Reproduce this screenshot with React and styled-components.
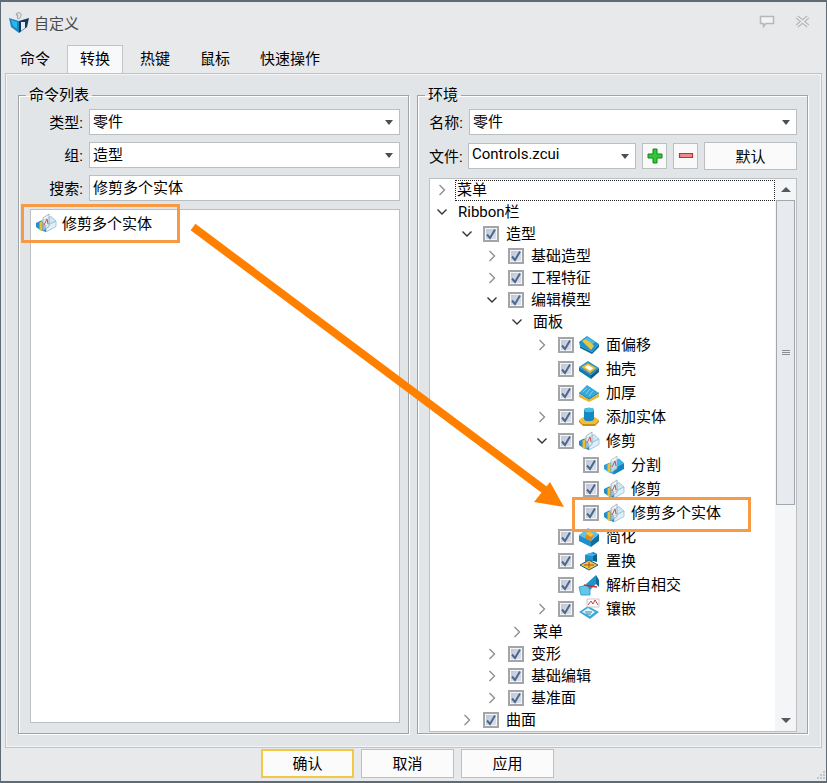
import React from 'react';
import styled, { createGlobalStyle } from 'styled-components';

const GlobalStyle = createGlobalStyle`
  html, body {
    margin: 0;
    padding: 0;
    background: #e8e9eb;
  }
  * {
    box-sizing: border-box;
  }
`;

const Window = styled.div`
  position: relative;
  display: flex;
  flex-direction: column;
  width: 827px;
  height: 783px;
  overflow: hidden;
  background: #e8e9eb;
  border-top: 2px solid #5f6b75;
  border-left: 1px solid #5f6b75;
  border-right: 1px solid #5f6b75;
  border-bottom: 2px solid #5f6b75;
  font-family: Roboto, "Noto Sans CJK SC", sans-serif;
  font-size: 15px;
  color: #000;
`;

const TitleBar = styled.div`
  display: flex;
  align-items: center;
  flex: 0 0 43px;
  padding: 0 16px 2px 7px;
`;

const Title = styled.div`
  margin-left: 4px;
  flex: 1;
  color: #4a4a4a;
`;

const WindowButtons = styled.div`
  display: flex;
  align-items: center;
  gap: 20px;
  margin-bottom: 2px;
`;

const TabBar = styled.div`
  display: flex;
  flex: 0 0 27px;
  gap: 4px;
  padding-left: 6px;
`;

const Tab = styled.div`
  height: ${(p) => (p.$active ? '28px' : '27px')};
  padding: 0 12px;
  line-height: 26px;
  position: relative;
  z-index: 1;
  background: ${(p) => (p.$active ? '#f8f9fa' : 'transparent')};
  border: 1px solid ${(p) => (p.$active ? '#c2c4c6' : 'transparent')};
  border-bottom: none;
`;

const Pane = styled.div`
  display: flex;
  flex: 1;
  gap: 8px;
  min-height: 0;
  margin: 0 4px;
  padding: 11px 13px 13px 12px;
  background: #e2e5e8;
  border: 1px solid #c0c2c4;
  box-shadow: inset 0 0 0 1px #f4f5f6;
`;

const Group = styled.fieldset`
  display: flex;
  flex-direction: column;
  flex: 0 0 391px;
  min-width: 0;
  margin: 0;
  padding: 4px ${(p) => p.$padRight}px ${(p) => p.$padBottom}px 11px;
  border: 1px solid #a0a2a4;
  box-shadow: inset 1px 1px 0 #fff, 1px 1px 0 #fff;
`;

const Legend = styled.legend`
  margin-left: -4px;
  padding: 0 3px;
  line-height: 20px;
`;

const FormRow = styled.div`
  display: flex;
  align-items: center;
  flex: 0 0 ${(p) => p.$height || 26}px;
  margin-bottom: ${(p) => p.$gap || 7}px;
`;

const Label = styled.div`
  flex: 0 0 ${(p) => p.$width}px;
  min-width: 0;
  padding-right: 6px;
  padding-bottom: 2px;
  text-align: right;
  white-space: nowrap;
`;

const Field = styled.div`
  position: relative;
  display: flex;
  align-items: center;
  flex: ${(p) => (p.$width ? `0 0 ${p.$width}px` : '1')};
  height: 26px;
  padding: 0 3px 4px;
  background: #fff;
  border: 1px solid #bcbfc2;
`;

const Caret = styled.span`
  position: absolute;
  right: 6px;
  top: 10px;
  width: 0;
  height: 0;
  border-left: 4px solid transparent;
  border-right: 4px solid transparent;
  border-top: 5px solid #4b4f53;
`;

const SquareButton = styled.div`
  display: flex;
  align-items: center;
  justify-content: center;
  flex: 0 0 25px;
  height: 26px;
  margin-left: ${(p) => p.$left}px;
  background: #f9f9f9;
  border: 1px solid #bcbfc2;
`;

const DefaultButton = styled.div`
  flex: 0 0 93px;
  height: 28px;
  margin-left: 6px;
  line-height: 28px;
  text-align: center;
  background: #fafafa;
  border: 1px solid #bcbfc2;
`;

const ListBox = styled.div`
  flex: 1;
  margin-top: 1px;
  padding: 2px 0 0 4px;
  background: #fff;
  border: 1px solid #bcbfc2;
`;

const ListItem = styled.div`
  display: flex;
  align-items: center;
  gap: 5px;
  height: 22px;
`;

const ListText = styled.span`
  padding-bottom: 2px;
`;

const TreeBox = styled.div`
  display: flex;
  flex: 1;
  min-height: 0;
  background: #fff;
  border: 1px solid #bcbfc2;
`;

const TreeRows = styled.div`
  flex: 1;
  min-width: 0;
  overflow: hidden;
`;

const Row = styled.div`
  display: flex;
  align-items: center;
  height: ${(p) => p.$height}px;
  padding-left: ${(p) => 4 + p.$level * 25}px;
  white-space: nowrap;
`;

const ArrowSlot = styled.span`
  display: flex;
  align-items: center;
  justify-content: center;
  flex: 0 0 16px;
  height: 16px;
  margin-right: 8px;
`;

const CheckBox = styled.span`
  display: flex;
  align-items: center;
  justify-content: center;
  flex: 0 0 16px;
  height: 16px;
  margin-right: ${(p) => (p.$withIcon ? 4 : 7)}px;
  background: linear-gradient(135deg, #bcc5d6, #dfe3ec);
  border: 2px solid #a3a5a7;
  box-shadow: inset 0 0 0 1px #f4f5f8;
`;

const RowIcon = styled.span`
  display: flex;
  flex: 0 0 22px;
  height: 22px;
  margin-right: 6px;
`;

const RowLabel = styled.span`
  line-height: 20px;
  ${(p) => p.$focus && `
    flex: 1;
    margin-left: -3px;
    padding-left: 2px;
    height: 21px;
    outline: 1px dotted #222;
    outline-offset: -1px;
  `}
`;

const ScrollBar = styled.div`
  display: flex;
  flex-direction: column;
  flex: 0 0 21px;
  padding: 0 1px;
  background: #f4f5f6;
`;

const ScrollArrow = styled.div`
  display: flex;
  align-items: center;
  justify-content: center;
  flex: 0 0 21px;
`;

const ScrollTriangle = styled.span`
  width: 0;
  height: 0;
  border-left: 5px solid transparent;
  border-right: 5px solid transparent;
  ${(p) => (p.$up ? 'border-bottom: 5px solid #55595d;' : 'border-top: 5px solid #55595d;')}
`;

const ScrollTrack = styled.div`
  flex: 1;
`;

const ScrollThumb = styled.div`
  display: flex;
  flex-direction: column;
  align-items: center;
  justify-content: center;
  gap: 1px;
  height: 305px;
  background: #e7ebf0;
  border: 1px solid #a4a8ac;
`;

const Grip = styled.span`
  width: 8px;
  height: 1px;
  background: #8c9095;
`;

const Footer = styled.div`
  position: relative;
  display: flex;
  flex: 0 0 33px;
  gap: 7px;
  padding: 1px 0 0 260px;
`;

const FooterButton = styled.div`
  flex: 0 0 93px;
  height: 29px;
  line-height: ${(p) => (p.$primary ? 27 : 26)}px;
  text-align: center;
  background: #fbfbfb;
  border: ${(p) => (p.$primary ? '2px solid #f3c847' : '1px solid #bdbfc1')};
  padding-top: ${(p) => (p.$primary ? 0 : 1)}px;
`;

const ResizeGrip = styled.svg`
  position: absolute;
  right: 0;
  bottom: 0;
`;

const Callout = styled.div`
  position: absolute;
  border: 3px solid #f79a45;
  pointer-events: none;
  z-index: 2;
`;

const ArrowLayer = styled.svg`
  position: absolute;
  left: -1px;
  top: -2px;
  pointer-events: none;
  z-index: 3;
`;

const Chevron = ({ dir }) =>
  dir === 'down' ? (
    <svg width="12" height="12" viewBox="0 0 12 12">
      <path d="M1.5 3.5 6 8l4.5-4.5" fill="none" stroke="#333" strokeWidth="1.4" />
    </svg>
  ) : (
    <svg width="12" height="12" viewBox="0 0 12 12">
      <path d="M3.5 1 8.5 6l-5 5" fill="none" stroke="#8f8f8f" strokeWidth="1.4" />
    </svg>
  );

const Check = () => (
  <svg width="12" height="12" viewBox="0 0 12 12">
    <path d="M2 6.5 5 10 10 1.5" fill="none" stroke="#4d688c" strokeWidth="2" />
  </svg>
);

const Logo = () => (
  <svg width="22" height="22" viewBox="0 0 22 22">
    <path d="M1 6 11 9v12L3 15z" fill="#1786c4" />
    <path d="M21 6 11 9v12l8-6z" fill="#123a5c" />
    <path d="M3 8 9 10v7L5 14z" fill="#33b4e6" />
    <path d="M9 1c3-1 5 1 4 3l-2 3-2-1 1-3-2 0z" fill="#dfe6ea" stroke="#6d7880" strokeWidth=".6" />
    <path d="M13 10h4v6l-4 3z" fill="#e6edf0" />
  </svg>
);

const TrimShape = () => (
  <>
    <path d="M6 9 16 4.500 21 9 11 14z" fill="#cde7f3" stroke="#8fbfd6" strokeWidth=".8" />
    <path d="M11 14 21 9v5.500L11 20z" fill="#dff0f8" stroke="#8fbfd6" strokeWidth=".8" />
    <path d="M1 11 6 8.500l5 5v6.500l-5-1.500L1 15z" fill="#1f8fcb" />
    <path d="M4.500 10.500 7.500 9v10l-3-1z" fill="#f0bd28" />
    <path d="M8 6 14 2v12.500l-6 4z" fill="#eef2f6" fillOpacity=".55" stroke="#98a2ae" strokeWidth=".8" />
    <path d="M9 13 12 7l1 5" fill="none" stroke="#c9504c" strokeWidth="1" />
  </>
);

const SplitShape = () => (
  <>
    <path d="M6 9 16 4.500 21 9 11 14z" fill="#41b2e2" />
    <path d="M11 14 21 9v6l-10 5.500z" fill="#1484bf" />
    <path d="M1 11 6 9l5 5v6.500l-5-2L1 15z" fill="#2c9fd8" />
    <path d="M4.500 10.500 7.500 9v9.500l-3-1z" fill="#f0c032" />
    <path d="M8 6 14 2v12.500l-6 4z" fill="#eef2f6" fillOpacity=".7" stroke="#a8b0ba" strokeWidth=".7" />
    <path d="M9 13 12 7l1 5" fill="none" stroke="#c9504c" strokeWidth="1" />
  </>
);

const OffsetShape = () => (
  <>
    <path d="M1 8 9 2l12 8-7 8L2 12z" fill="#1d94cc" />
    <path d="M2 12 14 18l7-8v3l-7 7-12-6z" fill="#0f6a9c" />
    <path d="M4 7 9 4l7 8-3 4z" fill="#e8c544" />
    <path d="M9 3l8 5-2 2-8-5z" fill="#50bbe6" />
  </>
);

const ShellShape = () => (
  <>
    <path d="M1 9 10 3l11 7-8 7z" fill="#1d94cc" />
    <path d="M1 9l12 8v4L1 13z" fill="#0f79b0" />
    <path d="M13 17l8-7v4l-8 7z" fill="#0c5f8d" />
    <path d="M5 9 10 6l7 4-5 4z" fill="#fff" stroke="#edb52e" strokeWidth="1.800" />
  </>
);

const ThickenShape = () => (
  <>
    <path d="M1 12 11 17l10-5v3l-10 5L1 15z" fill="#eab52a" />
    <path d="M1 11 9 3l12 8-10 6z" fill="#35a8dc" />
    <path d="M5 10 9 6M8 12l4-5M11 14l4-5" stroke="#9adcf5" strokeWidth=".8" fill="none" />
    <path d="M1 11 11 17l10-6" stroke="#116b9e" strokeWidth=".8" fill="none" />
  </>
);

const AddShape = () => (
  <>
    <path d="M1 14 5 11h12l4 3-4 4H5z" fill="#f0bf35" />
    <path d="M1 14l4 4h12l4-4v2l-4 4H5l-4-4z" fill="#c88d1a" />
    <path d="M6 4c0-3 10-3 10 0v9c0 3-10 3-10 0z" fill="#1488c6" />
    <ellipse cx="11" cy="4" rx="5" ry="2.200" fill="#49bce8" />
  </>
);

const SimplifyShape = () => (
  <>
    <path d="M1 9 10 2l11 6-8 7z" fill="#65c0e6" />
    <path d="M1 9l12 6v6L1 15z" fill="#1e8fca" />
    <path d="M13 15l8-7v7l-8 6z" fill="#0f6c9f" />
    <path d="M9 7l7 1-3 7-6-3z" fill="#d98a1c" />
    <path d="M10 5l6 3-3 3-5-3z" fill="#f2c53a" />
  </>
);

const ReplaceShape = () => (
  <>
    <path d="M7 5 15 2v9l-8 3z" fill="#1d94cc" />
    <path d="M15 2 19 4v8l-4-1z" fill="#0c5f8d" />
    <path d="M7 5 11 3l8 1-4 2z" fill="#46b7e6" />
    <path d="M2 15 11 10l9 5-9 5z" fill="#f1c43d" stroke="#1a5c88" strokeWidth="1" />
    <path d="M6 15h10M11 12v6" stroke="#b5471e" strokeWidth="1" />
  </>
);

const SelfCrossShape = () => (
  <>
    <path d="M8 10 18 1v9l-6 6z" fill="#1d94cc" />
    <path d="M18 1 21 6v7l-3-3z" fill="#0f6c9f" />
    <path d="M1 13l8-2 3 5v5H3z" fill="#66c6e8" stroke="#1d94cc" strokeWidth=".8" />
    <path d="M6 11 19 13" stroke="#d12a2a" strokeWidth="1.600" />
  </>
);

const InlayShape = () => (
  <>
    <path d="M1 14 10 8l11 6-9 7z" fill="#3aa8da" />
    <path d="M4 14l6-4 7 4-5 4z" fill="#e9f5fb" />
    <path d="M7 14h7M8 16h5" stroke="#2d7fb0" strokeWidth="1" />
    <path d="M9 9h12V1H9z" fill="#fff" stroke="#aab2ba" strokeWidth=".7" />
    <path d="M10 7l3-4 2 3 2-4 3 5" fill="none" stroke="#d3403c" strokeWidth="1" />
  </>
);

const shapes = {
  trim: TrimShape,
  split: SplitShape,
  offset: OffsetShape,
  shell: ShellShape,
  thicken: ThickenShape,
  add: AddShape,
  simplify: SimplifyShape,
  replace: ReplaceShape,
  cross: SelfCrossShape,
  inlay: InlayShape,
};

const CommandIcon = ({ name }) => {
  const Shape = shapes[name];
  return (
    <svg width="22" height="22" viewBox="0 0 22 22">
      <Shape />
    </svg>
  );
};

const treeRows = [
  { level: 0, arrow: 'right', label: '菜单', focus: true },
  { level: 0, arrow: 'down', label: 'Ribbon栏' },
  { level: 1, arrow: 'down', check: true, label: '造型' },
  { level: 2, arrow: 'right', check: true, label: '基础造型' },
  { level: 2, arrow: 'right', check: true, label: '工程特征' },
  { level: 2, arrow: 'down', check: true, label: '编辑模型' },
  { level: 3, arrow: 'down', label: '面板' },
  { level: 4, arrow: 'right', check: true, icon: 'offset', label: '面偏移' },
  { level: 4, check: true, icon: 'shell', label: '抽壳' },
  { level: 4, check: true, icon: 'thicken', label: '加厚' },
  { level: 4, arrow: 'right', check: true, icon: 'add', label: '添加实体' },
  { level: 4, arrow: 'down', check: true, icon: 'trim', label: '修剪' },
  { level: 5, check: true, icon: 'split', label: '分割' },
  { level: 5, check: true, icon: 'trim', label: '修剪' },
  { level: 5, check: true, icon: 'trim', label: '修剪多个实体' },
  { level: 4, check: true, icon: 'simplify', label: '简化' },
  { level: 4, check: true, icon: 'replace', label: '置换' },
  { level: 4, check: true, icon: 'cross', label: '解析自相交' },
  { level: 4, arrow: 'right', check: true, icon: 'inlay', label: '镶嵌' },
  { level: 3, arrow: 'right', label: '菜单' },
  { level: 2, arrow: 'right', check: true, label: '变形' },
  { level: 2, arrow: 'right', check: true, label: '基础编辑' },
  { level: 2, arrow: 'right', check: true, label: '基准面' },
  { level: 1, arrow: 'right', check: true, label: '曲面' },
];

const tabs = ['命令', '转换', '热键', '鼠标', '快速操作'];

const TreeRow = ({ row }) => (
  <Row $level={row.level} $height={row.icon ? 24 : 22}>
    <ArrowSlot>{row.arrow && <Chevron dir={row.arrow} />}</ArrowSlot>
    {row.check && (
      <CheckBox $withIcon={!!row.icon}>
        <Check />
      </CheckBox>
    )}
    {row.icon && (
      <RowIcon>
        <CommandIcon name={row.icon} />
      </RowIcon>
    )}
    <RowLabel $focus={row.focus}>{row.label}</RowLabel>
  </Row>
);

export default function App() {
  return (
    <>
      <GlobalStyle />
      <Window>
        <TitleBar>
          <Logo />
          <Title>自定义</Title>
          <WindowButtons>
            <svg width="16" height="14" viewBox="0 0 16 14">
              <path d="M1.500 1.500h13v7H7l-2.500 3v-3h-3z" fill="#f2f3f4" stroke="#b5b8ba" strokeWidth="1.500" />
            </svg>
            <svg width="15" height="13" viewBox="0 0 15 13">
              <path d="M2 2l11 9M13 2 2 11" stroke="#b5b8ba" strokeWidth="4" />
              <path d="M2 2l11 9M13 2 2 11" stroke="#eef0f1" strokeWidth="1.500" />
            </svg>
          </WindowButtons>
        </TitleBar>
        <TabBar>
          {tabs.map((t, i) => (
            <Tab key={t} $active={i === 1}>{t}</Tab>
          ))}
        </TabBar>
        <Pane>
          <Group $padRight={8} $padBottom={10}>
            <Legend>命令列表</Legend>
            <FormRow>
              <Label $width={59}>类型:</Label>
              <Field>零件<Caret /></Field>
            </FormRow>
            <FormRow>
              <Label $width={59}>组:</Label>
              <Field>造型<Caret /></Field>
            </FormRow>
            <FormRow>
              <Label $width={59}>搜索:</Label>
              <Field>修剪多个实体</Field>
            </FormRow>
            <ListBox>
              <ListItem>
                <CommandIcon name="trim" />
                <ListText>修剪多个实体</ListText>
              </ListItem>
            </ListBox>
          </Group>
          <Group $padRight={10} $padBottom={1}>
            <Legend>环境</Legend>
            <FormRow>
              <Label $width={40}>名称:</Label>
              <Field>零件<Caret /></Field>
            </FormRow>
            <FormRow $height={28} $gap={8}>
              <Label $width={39}>文件:</Label>
              <Field $width={168}>Controls.zcui<Caret /></Field>
              <SquareButton $left={6}>
                <svg width="16" height="16" viewBox="0 0 16 16">
                  <path d="M6 1h4v5h5v4h-5v5H6v-5H1V6h5z" fill="#35c43a" stroke="#0a8a12" strokeWidth="1" />
                </svg>
              </SquareButton>
              <SquareButton $left={6}>
                <svg width="16" height="8" viewBox="0 0 16 8">
                  <path d="M1.500 1.500h13v4h-13z" fill="#ef8a8a" stroke="#cc2a36" strokeWidth="1.200" />
                </svg>
              </SquareButton>
              <DefaultButton>默认</DefaultButton>
            </FormRow>
            <TreeBox>
              <TreeRows>
                {treeRows.map((row, i) => (
                  <TreeRow key={i} row={row} />
                ))}
              </TreeRows>
              <ScrollBar>
                <ScrollArrow><ScrollTriangle $up /></ScrollArrow>
                <ScrollTrack>
                  <ScrollThumb>
                    <Grip /><Grip /><Grip />
                  </ScrollThumb>
                </ScrollTrack>
                <ScrollArrow><ScrollTriangle /></ScrollArrow>
              </ScrollBar>
            </TreeBox>
          </Group>
        </Pane>
        <Footer>
          <FooterButton $primary>确认</FooterButton>
          <FooterButton>取消</FooterButton>
          <FooterButton>应用</FooterButton>
          <ResizeGrip width="12" height="12" viewBox="0 0 12 12">
            <path d="M9 2h2v2H9zM6 5h2v2H6zM9 5h2v2H9zM3 8h2v2H3zM6 8h2v2H6zM9 8h2v2H9z" fill="#c4c6c8" />
          </ResizeGrip>
        </Footer>

        <Callout style={{ left: 20, top: 202, width: 159, height: 39 }} />
        <Callout style={{ left: 571, top: 495, width: 179, height: 35 }} />
        <ArrowLayer width="827" height="783" viewBox="0 0 827 783">
          <path d="M193 227 546 491" stroke="#ff8000" strokeWidth="8" fill="none" />
          <path d="M564 507 534 502 550 482z" fill="#ff8000" />
        </ArrowLayer>
      </Window>
    </>
  );
}
